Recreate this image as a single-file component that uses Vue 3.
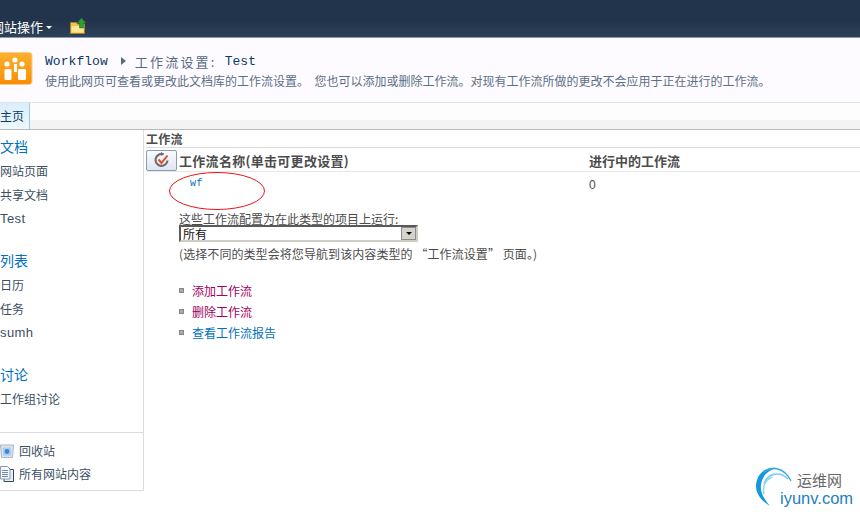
<template>
  <div class="page">
    <header class="topbar">
      <span class="site-actions">网站操作</span>
      <span class="caret"></span>
      <svg class="upload" width="18" height="18" viewBox="0 0 18 18">
        <path d="M1.5 7V5.5h6l1 1.5h7v9.5h-14z" fill="#e9c25a" stroke="#a8832a" />
        <path d="M2.5 9h12v6.5h-12z" fill="#fbe590" />
        <path d="M12.5 1l4.5 5h-2.5v5h-4V6H8z" fill="#2f9e36" stroke="#1d6b22" stroke-width=".5" />
      </svg>
    </header>
    <section class="titlebar">
      <div class="logo">
        <svg width="33" height="34" viewBox="0 0 33 34">
          <defs>
            <linearGradient id="logoGrad" x1="0" y1="0" x2="0" y2="1">
              <stop offset="0" stop-color="#fdb02e" />
              <stop offset="1" stop-color="#f98d07" />
            </linearGradient>
          </defs>
          <rect x="-3" y=".5" width="35" height="32" rx="3" fill="url(#logoGrad)" stroke="#f8cf8a" />
          <circle cx="15" cy="8" r="2.6" fill="#fff" />
          <circle cx="7" cy="12" r="2.6" fill="#fff" />
          <circle cx="22" cy="12" r="2.6" fill="#fff" />
          <rect x="14" y="12" width="3" height="8" fill="#fff" />
          <rect x="4.5" y="17" width="7" height="11" rx="1.5" fill="#fff" />
          <rect x="18" y="17" width="8" height="11" rx="1.5" fill="#fff" />
        </svg>
      </div>
      <div class="title-text">
        <div class="crumbs">
          <span class="mono dark">Workflow</span>
          <span class="arrow"></span>
          <span class="crumb-cn">工作流设置:</span>
          <span class="mono dark test">Test</span>
        </div>
        <div class="desc">使用此网页可查看或更改此文档库的工作流设置。&#160;&#160;您也可以添加或删除工作流。对现有工作流所做的更改不会应用于正在进行的工作流。</div>
      </div>
    </section>
    <nav class="navbar">
      <div class="home-tab">主页</div>
    </nav>
    <div class="body">
      <aside class="sidebar">
        <div class="side-main">
          <div class="group">
            <div class="side-head">文档</div>
            <div class="side-item">网站页面</div>
            <div class="side-item">共享文档</div>
            <div class="side-item latin">Test</div>
          </div>
          <div class="group">
            <div class="side-head">列表</div>
            <div class="side-item">日历</div>
            <div class="side-item">任务</div>
            <div class="side-item latin">sumh</div>
          </div>
          <div class="group">
            <div class="side-head">讨论</div>
            <div class="side-item">工作组讨论</div>
          </div>
        </div>
        <div class="side-foot">
          <div class="foot-item">
            <svg width="14" height="14" viewBox="0 0 14 14">
              <path d="M.5 1h13l-1 12.5h-11z" fill="#dbe4ee" stroke="#aab5c2" />
              <rect x="3" y="3.5" width="8" height="8" fill="#a9cdf0" />
              <circle cx="7" cy="7.5" r="2.4" fill="#3f86d8" />
            </svg>
            <span>回收站</span>
          </div>
          <div class="foot-item">
            <svg width="14" height="16" viewBox="0 0 14 16">
              <path d="M4 3.5h9.5v12H4z" fill="#e8eef5" stroke="#33475f" />
              <path d="M.5.5h7l2.5 2.5v10H.5z" fill="#f4f7fb" stroke="#8c9bad" />
              <path d="M2 4.5h6M2 6.5h6M2 8.5h6M2 10.5h6" stroke="#6d89ac" />
            </svg>
            <span>所有网站内容</span>
          </div>
        </div>
      </aside>
      <main class="content">
        <div class="section-title">工作流</div>
        <div class="table-head">
          <div class="check-btn">
            <svg width="18" height="18" viewBox="0 0 18 18">
              <path d="M14.5 9.5a6 6 0 1 1-4-6.2" fill="none" stroke="#707070" stroke-width="2.2" />
              <path d="M8 1l3.2 2-3 2z" fill="#707070" />
              <path d="M5.5 8.5l3 3.5 6-7.5" fill="none" stroke="#e2492a" stroke-width="2" />
            </svg>
          </div>
          <div class="col-name">工作流名称(单击可更改设置)</div>
          <div class="col-running">进行中的工作流</div>
        </div>
        <div class="wf-row">
          <span class="wf-name">wf</span>
          <span class="wf-count">0</span>
          <svg class="ring" width="96" height="40" viewBox="0 0 96 40">
            <ellipse cx="48" cy="20" rx="47.5" ry="18.5" fill="none" stroke="#e8131b" stroke-width="1" />
          </svg>
        </div>
        <div class="config">
          <div class="cfg-label">这些工作流配置为在此类型的项目上运行:</div>
          <div class="select">
            <span>所有</span>
            <span class="select-btn"><i></i></span>
          </div>
          <div class="cfg-note">(选择不同的类型会将您导航到该内容类型的 “工作流设置” 页面。)</div>
        </div>
        <ul class="links">
          <li><span class="bullet"></span><span class="visited">添加工作流</span></li>
          <li><span class="bullet"></span><span class="visited">删除工作流</span></li>
          <li><span class="bullet"></span><span class="link">查看工作流报告</span></li>
        </ul>
      </main>
    </div>
    <div class="watermark">
      <svg width="50" height="54" viewBox="0 0 50 54">
        <path d="M27 8C15 6 7 14 6 25c-.5 8 5 16 14 21C14 39 10 32 11 25c1-9 7-15 16-17z" fill="#1597dc" />
        <path d="M14 12c8-6 20-5 27 9" fill="none" stroke="#3aa9e3" stroke-width="1.3" />
        <path d="M14 24c3-10 15-14 24-5" fill="none" stroke="#7ccdf0" stroke-width="1.6" />
        <path d="M14 34c-2-8 2-14 8-17" fill="none" stroke="#8fd6f4" stroke-width="1.6" />
      </svg>
      <span class="wm-cn">运维网</span>
      <span class="wm-en">iyunv.com</span>
    </div>
  </div>
</template>

<script setup>
</script>

<style>
html, body { margin: 0; background: #fff; overflow: hidden; }
</style>

<style scoped>
.page {
  position: relative;
  width: 860px;
  height: 514px;
  overflow: hidden;
  background: #fff;
  font-family: "Noto Sans CJK SC", "Liberation Sans", sans-serif;
  font-size: 12px;
  color: #3b4f65;
}
.topbar {
  height: 38px;
  box-sizing: border-box;
  display: flex;
  align-items: flex-end;
  padding-bottom: 1px;
  background: linear-gradient(#21344c 0, #21344c 55%, #2d4158 100%);
  border-bottom: 1px solid #8e9aa8;
}
.site-actions {
  margin-left: -9px;
  flex: none;
  font-size: 13px;
  line-height: 19px;
  color: #fff;
}
.caret {
  margin: 0 0 7px 3px;
  border: 3px solid transparent;
  border-top: 3px solid #fff;
  border-bottom: 0;
}
.upload { margin: 0 0 1px 17px; flex: none; }
.titlebar {
  height: 65px;
  box-sizing: border-box;
  display: flex;
  padding: 14px 0 0 0;
  background: #fdfbff;
  border-bottom: 1px solid #e2e3e6;
}
.logo { width: 45px; height: 34px; flex: none; }
.crumbs {
  display: flex;
  align-items: center;
  height: 18px;
  font-size: 15px;
  color: #566a82;
}
.mono { font-family: "Liberation Mono", monospace; font-size: 13px; letter-spacing: 0.05px; }
.dark { color: #0b3a63; }
.arrow {
  margin: 0 9px 0 13px;
  border-left: 5px solid #566a82;
  border-top: 4px solid transparent;
  border-bottom: 4px solid transparent;
}
.crumb-cn { font-size: 13px; letter-spacing: 2.2px; }
.test { margin-left: 8px; }
.desc { margin-top: 2px; font-size: 12px; line-height: 17px; color: #5c6f85; white-space: nowrap; }
.navbar {
  height: 27px;
  box-sizing: border-box;
  background: linear-gradient(#fdfdfe 0, #fdfdfe 64%, #f3f3f3 64%);
  border-bottom: 1px solid #b8b8b8;
}
.home-tab {
  width: 30px;
  height: 26px;
  box-sizing: border-box;
  padding-top: 4px;
  white-space: nowrap;
  font-size: 12px;
  line-height: 17px;
  color: #0b3a63;
  background: linear-gradient(#d9eefb, #eef8fe);
  border-right: 1px solid #9cc8e8;
}
.body { display: flex; }
.sidebar {
  width: 144px;
  height: 361px;
  box-sizing: border-box;
  border-right: 1px solid #dcdcdc;
  border-bottom: 1px solid #dcdcdc;
  display: flex;
  flex-direction: column;
  justify-content: space-between;
}
.side-main { padding-top: 7px; }
.group { margin-bottom: 22px; }
.side-head { font-size: 14px; line-height: 18px; color: #0072bc; margin-bottom: 3px; height: 18px; }
.side-item { font-size: 12px; line-height: 26px; height: 23.7px; color: #3b4f65; }
.latin { font-family: "Liberation Sans", sans-serif; font-size: 13px; line-height: 28px; letter-spacing: 0.4px; }
.side-foot {
  height: 58px;
  box-sizing: border-box;
  border-top: 1px solid #dcdcdc;
  padding-top: 6px;
}
.foot-item {
  display: flex;
  align-items: center;
  height: 23px;
  gap: 5px;
  color: #3b4f65;
  font-size: 12px;
}
.foot-item svg { flex: none; width: 14px; }
.content { flex: 1; padding: 0 0 0 2px; min-width: 0; }
.section-title {
  font-weight: 700;
  font-size: 12px;
  letter-spacing: .3px;
  line-height: 17px;
  color: #4c4c4c;
  height: 17px;
  border-bottom: 1px solid #dcdcdc;
}
.table-head {
  display: flex;
  align-items: center;
  height: 22px;
  border-bottom: 1px solid #e6e6e6;
  margin-top: 1px;
}
.check-btn {
  width: 31px;
  height: 21px;
  box-sizing: border-box;
  border: 1px solid #8a9db5;
  border-radius: 2px;
  background: linear-gradient(#fbfbfd, #dfe6f1);
  display: flex;
  align-items: center;
  justify-content: center;
}
.col-name { margin-left: 2px; width: 410px; flex: none; font-weight: 700; font-size: 13px; color: #4c4c4c; letter-spacing: .3px; }
.col-running { font-weight: 700; font-size: 13px; color: #4c4c4c; white-space: nowrap; }
.wf-row {
  position: relative;
  height: 39px;
  font-family: "Liberation Mono", monospace;
  font-size: 10px;
}
.wf-name { position: absolute; left: 44px; top: 6px; color: #0072bc; letter-spacing: .5px; }
.wf-count { position: absolute; left: 443px; top: 6px; color: #4c4c4c; font-family: "Liberation Sans", sans-serif; font-size: 12px; }
.ring { position: absolute; left: 23px; top: -1px; }
.config { margin-left: 33px; color: #4c4c4c; }
.cfg-label { line-height: 16px; height: 14px; }
.select {
  width: 239px;
  height: 17px;
  box-sizing: border-box;
  border: 2px solid #5a5a5a;
  border-right-color: #cfcdc6;
  border-bottom-color: #cfcdc6;
  display: flex;
  align-items: center;
  justify-content: space-between;
  padding-left: 2px;
  color: #111;
  line-height: 13px;
  background: #fff;
}
.select-btn {
  width: 15px;
  height: 13px;
  background: #d6d3cb;
  border: 1px solid #8c8c8c;
  box-sizing: border-box;
  display: flex;
  align-items: center;
  justify-content: center;
}
.select-btn i {
  border: 3px solid transparent;
  border-top: 3px solid #000;
  border-bottom: 0;
}
.cfg-note { margin-top: 3px; line-height: 17px; white-space: nowrap; letter-spacing: .08px; }
.links { list-style: none; margin: 18px 0 0 33px; padding: 0; }
.links li { display: flex; align-items: center; height: 21px; }
.bullet {
  width: 5px;
  height: 5px;
  box-sizing: border-box;
  background: #aaa;
  border: 1px solid #888;
  margin-right: 8px;
}
.visited { color: #a1005f; }
.link { color: #0072bc; }
.watermark {
  position: absolute;
  left: 750px;
  top: 460px;
  width: 110px;
  height: 54px;
}
.watermark svg { position: absolute; left: 0; top: 0; }
.wm-cn { position: absolute; left: 47px; top: 10px; font-size: 15px; line-height: 20px; color: #666; }
.wm-en { position: absolute; left: 30px; top: 28px; font-family: "Liberation Sans", sans-serif; font-size: 16.5px; line-height: 20px; color: #1f7fc0; }
</style>
